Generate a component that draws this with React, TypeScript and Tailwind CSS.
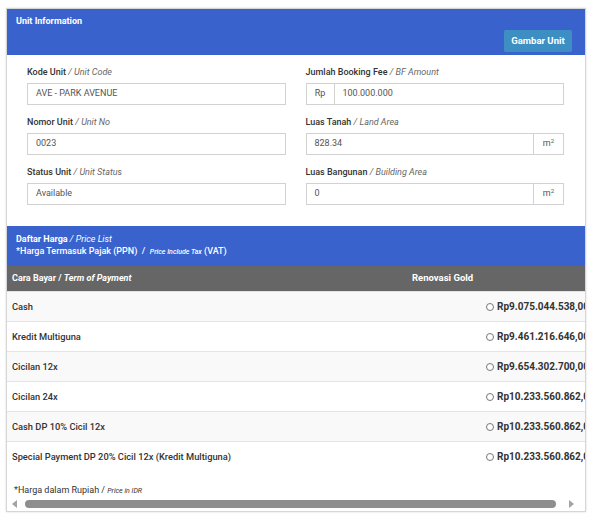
const font = { fontFamily: 'Roboto, "Liberation Sans", sans-serif' }

type Field = {
  label: string
  sub: string
  value: string
  prefix?: string
  suffix?: boolean
}

const leftFields: Field[] = [
  { label: 'Kode Unit', sub: 'Unit Code', value: 'AVE - PARK AVENUE' },
  { label: 'Nomor Unit', sub: 'Unit No', value: '0023' },
  { label: 'Status Unit', sub: 'Unit Status', value: 'Available' },
]

const rightFields: Field[] = [
  { label: 'Jumlah Booking Fee', sub: 'BF Amount', value: '100.000.000', prefix: 'Rp' },
  { label: 'Luas Tanah', sub: 'Land Area', value: '828.34', suffix: true },
  { label: 'Luas Bangunan', sub: 'Building Area', value: '0', suffix: true },
]

const prices = [
  { term: 'Cash', price: 'Rp9.075.044.538,00' },
  { term: 'Kredit Multiguna', price: 'Rp9.461.216.646,00' },
  { term: 'Cicilan 12x', price: 'Rp9.654.302.700,00' },
  { term: 'Cicilan 24x', price: 'Rp10.233.560.862,00' },
  { term: 'Cash DP 10% Cicil 12x', price: 'Rp10.233.560.862,00' },
  { term: 'Special Payment DP 20% Cicil 12x (Kredit Multiguna)', price: 'Rp10.233.560.862,00' },
]

function FormField({ field }: { field: Field }) {
  return (
    <div className="mb-[12px]">
      <div className="mb-[5px] h-[11px] text-[9px] leading-[11px] font-medium text-[#333]">
        {field.label} <span className="font-normal italic text-[#666]">/ {field.sub}</span>
      </div>
      <div className="flex h-[22px] border border-[#d2d2d2] bg-white text-[9px] text-[#555]">
        {field.prefix && (
          <div className="flex w-[28px] items-center justify-center border-r border-[#d2d2d2]">{field.prefix}</div>
        )}
        <div className="flex flex-1 items-center px-[8px]">{field.value}</div>
        {field.suffix && (
          <div className="flex w-[30px] items-center justify-center border-l border-[#d2d2d2]">
            m<sup className="text-[6px]">2</sup>
          </div>
        )}
      </div>
    </div>
  )
}

export default function App() {
  return (
    <div className="min-h-[520px] bg-white pl-[6px] pr-[8px] pt-[8px]" style={font}>
      <div className="w-[580px] border border-[#d6d6d6] shadow-[0_0_2px_rgba(0,0,0,0.15)]">
        {/* unit info header */}
        <div className="flex h-[46px] flex-col bg-[#3a62cd] pl-[9px] pr-[13px] pt-[6px]">
          <div className="text-[9px] font-bold leading-[12px] text-white">Unit Information</div>
          <button
            type="button"
            className="mt-[3px] h-[22px] w-[68px] shrink-0 self-end rounded-[2px] bg-[#3d8ec2] text-[9.5px] font-bold text-white"
          >
            Gambar Unit
          </button>
        </div>

        {/* form */}
        <div className="grid grid-cols-2 gap-x-[20px] pl-[20px] pr-[21px] pt-[12px] pb-[9px]">
          <div>
            {leftFields.map(f => (
              <FormField key={f.label} field={f} />
            ))}
          </div>
          <div>
            {rightFields.map(f => (
              <FormField key={f.label} field={f} />
            ))}
          </div>
        </div>

        {/* price list */}
        <div className="h-[40px] bg-[#3a62cd] px-[9px] pt-[7px] text-white">
          <div className="text-[9px] font-bold leading-[12px]">
            Daftar Harga <span className="font-normal italic">/ Price List</span>
          </div>
          <div className="text-[9px] font-medium leading-[12px]">
            *Harga Termasuk Pajak (PPN) &nbsp;/&nbsp; <span className="text-[7px] font-medium italic">Price Include Tax</span>{' '}
            (VAT)
          </div>
        </div>

        <div className="overflow-hidden">
          <div className="w-[620px]">
            <div className="flex h-[25px] items-center bg-[#666] text-[9px] font-bold text-white">
              <div className="w-[399px] pl-[5px]">
                Cara Bayar / <span className="italic">Term of Payment</span>
              </div>
              <div className="pl-[6px] text-[9.5px]">Renovasi Gold</div>
            </div>
            {prices.map((p, i) => (
              <div
                key={p.term}
                className={`flex h-[30px] items-center border-t border-[#e4e4e4] text-[9.3px] font-medium text-[#333] ${
                  i % 2 === 0 ? 'bg-[#f9f9f9]' : 'bg-white'
                }`}
              >
                <div className="w-[399px] pl-[5px]">{p.term}</div>
                <div className="flex items-center whitespace-nowrap pl-[80px]">
                  <span className="mr-[3px] inline-block h-[8px] w-[8px] rounded-full border border-[#777] bg-white" />
                  <span className="text-[10px] font-bold">{p.price}</span>
                </div>
              </div>
            ))}
          </div>
        </div>

        {/* footer */}
        <div className="pl-[7px] pt-[13px] text-[9px] leading-[12px] text-[#333]">
          *Harga dalam Rupiah / <span className="text-[7px] italic">Price in IDR</span>
        </div>
        <div className="flex h-[14px] items-center px-[5px] pb-[1px]">
          <svg width="6" height="8" viewBox="0 0 6 8" className="mr-[7px]">
            <path d="M5 0 L0 4 L5 8 Z" fill="#a3a3a3" />
          </svg>
          <div className="h-[8px] flex-1 rounded-full bg-[#8e8e8e]" />
          <svg width="6" height="8" viewBox="0 0 6 8" className="ml-[13px] mr-[5px]">
            <path d="M0 0 L5 4 L0 8 Z" fill="#a3a3a3" />
          </svg>
        </div>
      </div>
    </div>
  )
}
